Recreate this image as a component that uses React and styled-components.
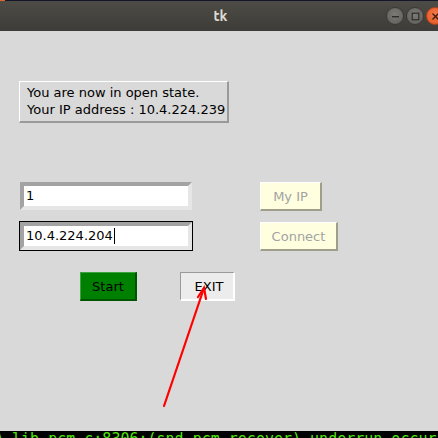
import React from "react";
import styled, { createGlobalStyle } from "styled-components";

const Global = createGlobalStyle`
  html, body { margin: 0; padding: 0; background: #d9d9d9; }
  body { width: 438px; height: 438px; overflow: hidden; }
`;

const Window = styled.div`
  width: 438px;
  height: 438px;
  display: flex;
  flex-direction: column;
  overflow: hidden;
  font-family: "DejaVu Sans", sans-serif;
`;

const TopEdge = styled.div`
  height: 1px;
  background: linear-gradient(to right, #e0642c 0 5px, #16162a 5px);
  flex: none;
`;

const TitleBar = styled.div`
  height: 30px;
  flex: none;
  display: flex;
  align-items: center;
  justify-content: center;
  position: relative;
  background: linear-gradient(#4d4b46, #3d3c38);
  color: #dfdbd2;
  font-family: "Ubuntu", "DejaVu Sans", sans-serif;
  font-weight: bold;
  font-size: 14px;
  padding-left: 3px;
`;

const Controls = styled.div`
  position: absolute;
  right: -6px;
  top: 6px;
  display: flex;
  gap: 2px;
`;

const Ctrl = styled.div`
  width: 18px;
  height: 18px;
  border-radius: 50%;
  box-sizing: border-box;
  border: 1px solid ${(p) => (p.$close ? "#b8401a" : "#3a3935")};
  background: ${(p) =>
    p.$close
      ? "radial-gradient(circle at 50% 40%, #f57a4a, #e0541f)"
      : "radial-gradient(circle at 50% 40%, #7c7a74, #5f5d58)"};
  display: flex;
  align-items: center;
  justify-content: center;
`;

const Body = styled.div`
  flex: 1;
  position: relative;
  background: #d9d9d9;
  padding: 50px 0 0 19px;
  display: flex;
  flex-direction: column;
  align-items: flex-start;
`;

const InfoBox = styled.div`
  width: 210px;
  height: 42px;
  box-sizing: border-box;
  border-top: 1px solid #ffffff;
  border-left: 1px solid #ffffff;
  border-right: 2px solid #9a9a9a;
  border-bottom: 2px solid #9a9a9a;
  padding: 2px 0 0 7px;
  font-size: 13px;
  line-height: 17px;
  color: #000;
`;

const Form = styled.div`
  margin-top: 58px;
  display: grid;
  grid-template-columns: 174px auto;
  column-gap: 67px;
  row-gap: 10px;
  align-items: end;
  justify-items: start;
`;

const Entry = styled.div`
  width: 174px;
  height: 30px;
  box-sizing: border-box;
  border: 1px solid ${(p) => (p.$focus ? "#000" : "#d9d9d9")};
  display: flex;
`;

const EntryInner = styled.div`
  flex: 1;
  box-sizing: border-box;
  border-style: solid;
  border-width: 4px;
  border-color: #a3a3a3 #e6e6e6 #e6e6e6 #a3a3a3;
  background: #fff;
  padding: 0 0 0 2px;
  font-size: 13px;
  line-height: 20px;
  color: #000;
  display: flex;
  align-items: center;
`;

const Caret = styled.span`
  display: inline-block;
  width: 1px;
  height: 16px;
  background: #000;
  margin-left: 1px;
`;

const TkButton = styled.div`
  width: ${(p) => p.$w}px;
  height: 29px;
  box-sizing: border-box;
  padding-left: ${(p) => p.$shift || 0}px;
  display: flex;
  align-items: center;
  justify-content: center;
  font-size: 13px;
  border-style: solid;
  border-width: 1px 2px 2px 1px;
  border-color: ${(p) => p.$borders};
  background: ${(p) => p.$bg};
  color: ${(p) => p.$fg};
`;

const ActionRow = styled.div`
  margin-top: 21px;
  margin-left: 61px;
  display: flex;
  gap: 43px;
`;

const ArrowLayer = styled.svg`
  position: absolute;
  left: 0;
  top: 0;
  width: 438px;
  height: 400px;
  pointer-events: none;
`;

const Terminal = styled.div`
  height: 7px;
  flex: none;
  background: #000;
  overflow: hidden;
  white-space: nowrap;
  font-family: "DejaVu Sans Mono", monospace;
  font-size: 15px;
  line-height: 18px;
  color: #4ee60a;
`;

const TermText = styled.div`
  margin-left: -6px;
  margin-top: -1px;
`;

export default function App() {
  return (
    <>
      <Global />
      <Window>
        <TopEdge />
        <TitleBar>
          tk
          <Controls>
            <Ctrl>
              <svg width="9" height="9" viewBox="0 0 9 9">
                <rect x="1" y="4" width="7" height="1.4" fill="#2f2e2b" />
              </svg>
            </Ctrl>
            <Ctrl>
              <svg width="9" height="9" viewBox="0 0 9 9">
                <rect x="1.2" y="1.2" width="6.6" height="6.6" fill="none" stroke="#2f2e2b" strokeWidth="1.2" />
              </svg>
            </Ctrl>
            <Ctrl $close>
              <svg width="9" height="9" viewBox="0 0 9 9">
                <path d="M1.5 1.5L7.5 7.5M7.5 1.5L1.5 7.5" stroke="#3a1a0c" strokeWidth="1.3" />
              </svg>
            </Ctrl>
          </Controls>
        </TitleBar>
        <Body>
          <InfoBox>
            You are now in open state.
            <br />
            Your IP address : 10.4.224.239
          </InfoBox>
          <Form>
            <Entry>
              <EntryInner>1</EntryInner>
            </Entry>
            <TkButton
              $bg="#ffffe0"
              $fg="#a3a3a3"
              $borders="#ffffff #9e9e8a #9e9e8a #ffffff"
              $w={62}
            >
              My IP
            </TkButton>
            <Entry $focus>
              <EntryInner>
                10.4.224.204
                <Caret />
              </EntryInner>
            </Entry>
            <TkButton
              $bg="#ffffe0"
              $fg="#a3a3a3"
              $borders="#ffffff #9e9e8a #9e9e8a #ffffff"
              $w={78}
            >
              Connect
            </TkButton>
          </Form>
          <ActionRow>
            <TkButton
              $bg="#008000"
              $fg="#000"
              $borders="#3fa03f #005500 #005500 #3fa03f"
              $w={57}
            >
              Start
            </TkButton>
            <TkButton
              $bg="#ececec"
              $fg="#000"
              $borders="#9a9a9a #ffffff #ffffff #9a9a9a"
              $w={55}
              $shift={4}
            >
              EXIT
            </TkButton>
          </ActionRow>
          <ArrowLayer viewBox="0 0 438 400">
            <g stroke="#ff0000" strokeWidth="2.2" fill="none" strokeLinecap="round">
              <line x1="164" y1="375" x2="204" y2="257" />
              <path d="M198 266 L204 257 L206 268" />
            </g>
          </ArrowLayer>
        </Body>
        <Terminal>
          <TermText>A lib pcm.c:8306:(snd_pcm_recover) underrun occurred</TermText>
        </Terminal>
      </Window>
    </>
  );
}
